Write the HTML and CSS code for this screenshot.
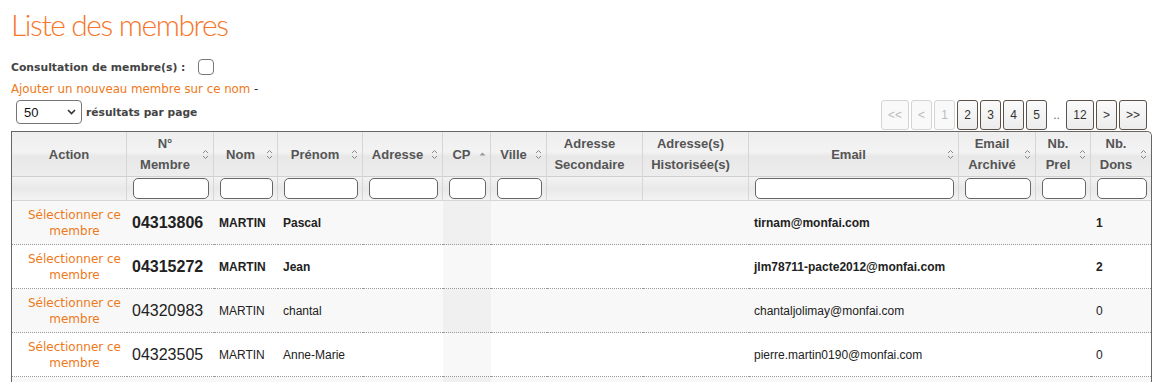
FILE: index.html
```html
<!DOCTYPE html>
<html lang="fr">
<head>
    <meta charset="UTF-8">
    <title>Liste des membres</title>
    <link rel="stylesheet" href="styles.css">
</head>
<body>
    <h1 class="title">Liste des membres</h1>

    <div class="consult">
        <span>Consultation de membre(s) :</span>
        <span class="check"></span>
    </div>
    <div class="add-line"><a href="#">Ajouter un nouveau membre sur ce nom</a> -</div>

    <div class="toolbar">
        <div class="per-page">
            <div class="select">50 <svg width="9" height="6" viewBox="0 0 9 6"><path d="M1 1l3.5 3.5L8 1" fill="none" stroke="#333" stroke-width="1.6"/></svg></div>
            <span>résultats par page</span>
        </div>
        <div class="pager">
            <span class="pg off wide">&lt;&lt;</span>
            <span class="pg off">&lt;</span>
            <span class="pg off">1</span>
            <span class="pg">2</span>
            <span class="pg">3</span>
            <span class="pg">4</span>
            <span class="pg">5</span>
            <span class="dots">..</span>
            <span class="pg wide">12</span>
            <span class="pg">&gt;</span>
            <span class="pg wide">&gt;&gt;</span>
        </div>
    </div>

    <table class="members">
        <colgroup>
            <col style="width:115px"><col style="width:87px"><col style="width:64px"><col style="width:85px">
            <col style="width:80px"><col style="width:48px"><col style="width:56px"><col style="width:96px">
            <col style="width:106px"><col style="width:210px"><col style="width:77px"><col style="width:55px">
            <col style="width:60px">
        </colgroup>
        <thead>
            <tr class="heads">
                <th>Action</th>
                <th class="sort">N°<br>Membre</th>
                <th class="sort">Nom</th>
                <th class="sort">Prénom</th>
                <th class="sort">Adresse</th>
                <th class="sort asc">CP</th>
                <th class="sort">Ville</th>
                <th>Adresse<br>Secondaire</th>
                <th>Adresse(s)<br>Historisée(s)</th>
                <th class="sort">Email</th>
                <th class="sort">Email<br>Archivé</th>
                <th class="sort">Nb.<br>Prel</th>
                <th class="sort">Nb.<br>Dons</th>
            </tr>
            <tr class="filters">
                <td></td>
                <td><input type="text"></td>
                <td><input type="text"></td>
                <td><input type="text"></td>
                <td><input type="text"></td>
                <td><input type="text"></td>
                <td><input type="text"></td>
                <td></td>
                <td></td>
                <td><input type="text"></td>
                <td><input type="text"></td>
                <td><input type="text"></td>
                <td><input type="text"></td>
            </tr>
        </thead>
        <tbody>
            <tr class="odd strong">
                <td class="act"><a href="#">Sélectionner ce membre</a></td>
                <td class="num">04313806</td>
                <td>MARTIN</td>
                <td>Pascal</td>
                <td></td><td class="cp"></td><td></td><td></td><td></td>
                <td>tirnam@monfai.com</td>
                <td></td><td></td>
                <td>1</td>
            </tr>
            <tr class="even strong">
                <td class="act"><a href="#">Sélectionner ce membre</a></td>
                <td class="num">04315272</td>
                <td>MARTIN</td>
                <td>Jean</td>
                <td></td><td class="cp"></td><td></td><td></td><td></td>
                <td>jlm78711-pacte2012@monfai.com</td>
                <td></td><td></td>
                <td>2</td>
            </tr>
            <tr class="odd">
                <td class="act"><a href="#">Sélectionner ce membre</a></td>
                <td class="num">04320983</td>
                <td>MARTIN</td>
                <td>chantal</td>
                <td></td><td class="cp"></td><td></td><td></td><td></td>
                <td>chantaljolimay@monfai.com</td>
                <td></td><td></td>
                <td>0</td>
            </tr>
            <tr class="even">
                <td class="act"><a href="#">Sélectionner ce membre</a></td>
                <td class="num">04323505</td>
                <td>MARTIN</td>
                <td>Anne-Marie</td>
                <td></td><td class="cp"></td><td></td><td></td><td></td>
                <td>pierre.martin0190@monfai.com</td>
                <td></td><td></td>
                <td>0</td>
            </tr>
            <tr class="odd">
                <td></td><td></td><td></td><td></td>
                <td></td><td class="cp"></td><td></td><td></td><td></td>
                <td></td><td></td><td></td><td></td>
            </tr>
        </tbody>
    </table>
</body>
</html>
```

FILE: styles.css
```css
body {
    margin: 0;
    padding: 0 11px;
    font-family: "Liberation Sans", Arial, sans-serif;
    font-size: 12px;
    color: #333;
    background: #fff;
    overflow: hidden;
}

a {
    color: #f07818;
    text-decoration: none;
}

.title {
    margin: 6px 0 0;
    font-family: Lato, "Open Sans", sans-serif;
    font-weight: 300;
    font-size: 30px;
    line-height: 36px;
    color: #f7762a;
    letter-spacing: -1.4px;
}

.consult {
    display: flex;
    align-items: center;
    gap: 13px;
    margin-top: 17px;
    font-family: "DejaVu Sans", Verdana, sans-serif;
    font-weight: bold;
    font-size: 10.8px;
    color: #444;
    height: 16px;
}

.check {
    width: 14px;
    height: 14px;
    border: 1px solid #777;
    border-radius: 4px;
}

.add-line {
    margin-top: 6px;
    font-family: "DejaVu Sans", Verdana, sans-serif;
    font-size: 11.8px;
    line-height: 16px;
    color: #333;
}

.toolbar {
    display: flex;
    justify-content: space-between;
    align-items: flex-start;
    margin-top: 3px;
}

.per-page {
    display: flex;
    align-items: center;
    gap: 4px;
    padding-left: 5px;
    font-family: "DejaVu Sans", Verdana, sans-serif;
    font-weight: bold;
    font-size: 10.7px;
    color: #444;
}

.select {
    display: flex;
    align-items: center;
    justify-content: space-between;
    width: 52px;
    height: 22px;
    padding: 0 5px 0 7px;
    border: 1px solid #767676;
    border-radius: 4px;
    font-family: "Liberation Sans", Arial, sans-serif;
    font-weight: normal;
    font-size: 13px;
    color: #111;
}

.pager {
    display: flex;
    align-items: center;
    gap: 2px;
    margin-right: 5px;
}

.pg {
    display: flex;
    align-items: center;
    justify-content: center;
    width: 19px;
    height: 28px;
    border: 1px solid #5c5248;
    border-radius: 3px;
    background: linear-gradient(#fafafa, #ececec);
    font-size: 12px;
    color: #333;
}

.pg.wide {
    width: 26px;
}

.pg.off {
    border-color: #d4d4d4;
    color: #bbb;
    background: #f9f9f9;
}

.dots {
    width: 15px;
    text-align: center;
    color: #666;
}

.members {
    margin-top: 1px;
    width: 1139px;
    table-layout: fixed;
    border-collapse: separate;
    border-spacing: 0;
    border-left: 1px solid #666;
    border-right: 1px solid #666;
    border-top: 1px solid #666;
    border-radius: 0 5px 0 0;
}

.heads th {
    height: 44px;
    padding: 0 14px 0 4px;
    background: linear-gradient(#eeeeee, #f3f3f3 45%, #e8e8e8 55%, #ededed);
    border-right: 1px solid #d6d6d6;
    border-bottom: 1px solid #d0d0d0;
    font-size: 13px;
    line-height: 21px;
    font-weight: bold;
    color: #555;
    text-align: center;
    position: relative;
}

.heads th:first-child {
    padding-right: 4px;
}

.heads th:last-child {
    border-right: none;
    border-top-right-radius: 5px;
}

.heads th.sort::after {
    content: "";
    position: absolute;
    right: 4px;
    top: 17px;
    width: 7px;
    height: 11px;
    background-image: url("data:image/svg+xml,%3Csvg xmlns='http://www.w3.org/2000/svg' width='7' height='11'%3E%3Cpath d='M1 4l2.5-2.5L6 4M1 7l2.5 2.5L6 7' fill='none' stroke='%23888' stroke-width='1'/%3E%3C/svg%3E");
}

.heads th.asc::after {
    background-image: url("data:image/svg+xml,%3Csvg xmlns='http://www.w3.org/2000/svg' width='7' height='11'%3E%3Cpath d='M0.5 6.5h6L3.5 3.5z' fill='%23999'/%3E%3C/svg%3E");
}

.filters td {
    height: 23px;
    padding: 0 4px 0 6px;
    background: linear-gradient(#f3f3f3, #e9e9e9 50%, #f3f3f3);
    border-right: 1px solid #d6d6d6;
    border-bottom: 1px solid #d6d6d6;
}

.filters td:last-child {
    border-right: none;
}

.filters input {
    display: block;
    width: 100%;
    height: 21px;
    box-sizing: border-box;
    border: 1px solid #666;
    border-radius: 5px;
    background: #fff;
}

tbody td {
    height: 43px;
    padding: 0 5px;
    border-bottom: 1px dotted #999;
    font-size: 12px;
    color: #222;
    vertical-align: middle;
}

tbody tr.odd td {
    background: #f8f8f8;
}

tbody tr.even td {
    background: #fff;
}

tbody tr.odd td.cp {
    background: #f0f0f0;
}

tbody tr.even td.cp {
    background: #f8f8f8;
}

tbody tr.strong td {
    font-weight: bold;
}

td.act {
    text-align: center;
    padding: 0 0 0 10px;
    font-family: "DejaVu Sans", Verdana, sans-serif;
    font-size: 12px;
    line-height: 16px;
    font-weight: normal !important;
}

td.num {
    font-size: 16px;
}
```
